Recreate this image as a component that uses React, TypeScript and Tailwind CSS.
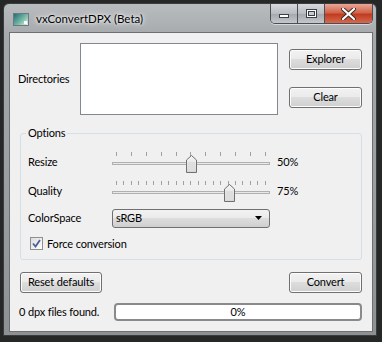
import React from 'react';

const font = { fontFamily: 'Lato, "Noto Sans", sans-serif' };

function WinButton({ label, className = '' }: { label: string; className?: string }) {
  return (
    <div
      className={`flex h-[21px] items-center justify-center whitespace-nowrap rounded-[3px] border border-[#707070] bg-[linear-gradient(#f2f2f2_0%,#ebebeb_45%,#dddddd_50%,#cfcfcf_100%)] text-black shadow-[inset_0_0_0_1px_#fcfcfc] ${className}`}
    >
      {label}
    </div>
  );
}

function Slider({ ticks, value }: { ticks: number; value: number }) {
  const marks = Array.from({ length: ticks });
  return (
    <div className="relative h-[26px] w-[158px]">
      <div className="absolute left-[4px] right-[4px] top-0 flex justify-between">
        {marks.map((_, i) => (
          <div key={i} className="h-[4px] w-px bg-[#a0a0a0]" />
        ))}
      </div>
      <div className="absolute left-0 right-0 top-[10px] h-[3px] border border-[#b0b0b0] bg-[#e7eaea]" />
      <svg
        className="absolute top-[3px]"
        style={{ left: `${4 + (value / 100) * 150 - 5}px` }}
        width="11"
        height="18"
        viewBox="0 0 11 18"
      >
        <defs>
          <linearGradient id="hg" x1="0" x2="0" y1="0" y2="1">
            <stop offset="0" stopColor="#f6f6f6" />
            <stop offset="1" stopColor="#d6d6d6" />
          </linearGradient>
        </defs>
        <path d="M5.5 0.5 L10.5 5 L10.5 17.5 L0.5 17.5 L0.5 5 Z" fill="url(#hg)" stroke="#707070" />
        <rect x="2" y="7" width="7" height="9" fill="#dedede" />
      </svg>
    </div>
  );
}

function TitleBar() {
  return (
    <div className="flex h-[28px] items-start">
      <div className="mt-[9px] ml-[4px] flex h-[13px] w-[16px] items-end border border-[#6a7a80] bg-[linear-gradient(135deg,#1f6e7a,#7fbfa8_60%,#e8f0ee)]">
        <div className="ml-auto mr-[1px] mb-[1px] h-[3px] w-[3px] bg-white" />
      </div>
      <div className="ml-[7px] mt-[7px] whitespace-nowrap text-[11.5px] leading-[16px] text-black [text-shadow:0_0_6px_#ffffff,0_0_3px_#ffffff]">
        vxConvertDPX (Beta)
      </div>
      <div className="ml-auto flex h-[20px] overflow-hidden rounded-b-[5px] border border-t-0 border-[#4b4f55] shadow-[0_1px_0_#d8d8d8]">
        <div className="flex w-[27px] items-center justify-center border-r border-[#4b4f55] bg-[linear-gradient(#d7d9dc,#b9bcc1_50%,#a4a8ad_51%,#c4c7cb)]">
          <div className="mt-[5px] h-[4px] w-[10px] border border-[#3c3f44] bg-white" />
        </div>
        <div className="flex w-[27px] items-center justify-center border-r border-[#4b4f55] bg-[linear-gradient(#d7d9dc,#b9bcc1_50%,#a4a8ad_51%,#c4c7cb)]">
          <div className="h-[9px] w-[11px] border border-[#3c3f44] bg-white p-[1px]">
            <div className="h-full w-full border border-[#3c3f44] bg-[#c8cbcf]" />
          </div>
        </div>
        <div className="flex w-[47px] items-center justify-center bg-[linear-gradient(#e8a796,#d0654c_45%,#c13c1f_55%,#d66a4e)]">
          <svg width="15" height="12" viewBox="0 0 15 12">
            <path d="M2 1 L13 11 M13 1 L2 11" stroke="#3b2a26" strokeWidth="4" strokeLinecap="round" />
            <path d="M2 1 L13 11 M13 1 L2 11" stroke="#ffffff" strokeWidth="2.2" strokeLinecap="round" />
          </svg>
        </div>
      </div>
    </div>
  );
}

export default function App() {
  return (
    <div className="h-[342px] w-[382px] overflow-hidden bg-[#262828] pl-[3px] pt-[3px]" style={font}>
      <div className="flex h-[333px] w-[374px] flex-col rounded-t-[6px] border border-[#3a3c3e] bg-[linear-gradient(180deg,#b9bcbf_0%,#a6a9ac_10%,#9a9d9f_60%,#8e9193_100%)] pb-[3px] pl-[5px] pr-[3px]">
        <TitleBar />
        <div className="flex h-[301px] w-[364px] flex-col border border-[#6d7073] bg-[#f0f0f0] text-[11px] leading-[16px] tracking-[-0.15px] text-black">
          {/* Directories */}
          <div className="mt-[10px] flex pl-[8px]">
            <div className="flex h-[72px] w-[62px] items-center whitespace-nowrap">Directories</div>
            <div className="h-[72px] w-[198px] border border-[#828790] bg-white" />
            <div className="ml-[11px] flex flex-col gap-[17px] pt-[6px]">
              <WinButton label="Explorer" className="w-[73px]" />
              <WinButton label="Clear" className="w-[73px]" />
            </div>
          </div>

          {/* Options group */}
          <div className="relative mx-[10px] mt-[18px] h-[127px] rounded-[3px] border border-[#d5dfe5]">
            <div className="absolute -top-[9px] left-[5px] bg-[#f0f0f0] px-[2px]">Options</div>
            <div className="flex flex-col pl-[7px] pt-[18px]">
              <div className="flex h-[26px] items-start">
                <div className="mt-[2px] w-[84px]">Resize</div>
                <Slider ticks={11} value={50} />
                <div className="ml-[7px] mt-[2px]">50%</div>
              </div>
              <div className="mt-[3px] flex h-[26px] items-start">
                <div className="mt-[2px] w-[84px]">Quality</div>
                <Slider ticks={21} value={75} />
                <div className="ml-[7px] mt-[2px]">75%</div>
              </div>
              <div className="mt-[2px] flex items-center">
                <div className="w-[84px]">ColorSpace</div>
                <div className="flex h-[19px] w-[158px] items-center rounded-[3px] border border-[#707070] bg-[linear-gradient(#f2f2f2_0%,#ebebeb_45%,#dddddd_50%,#cfcfcf_100%)] pl-[3px] pr-[7px]">
                  <span>sRGB</span>
                  <svg className="ml-auto" width="7" height="4" viewBox="0 0 7 4">
                    <path d="M0 0 L7 0 L3.5 4 Z" fill="#000" />
                  </svg>
                </div>
              </div>
              <div className="mt-[8px] flex items-center pl-[2px]">
                <div className="flex h-[13px] w-[13px] items-center justify-center border border-[#8e8f8f] bg-[linear-gradient(135deg,#dcdcdc,#ffffff)] p-[1px]">
                  <svg width="9" height="9" viewBox="0 0 9 9">
                    <path d="M1 4.5 L3.5 7.5 L8 1" fill="none" stroke="#4a5f97" strokeWidth="1.8" />
                  </svg>
                </div>
                <span className="ml-[4px]">Force conversion</span>
              </div>
            </div>
          </div>

          {/* Bottom buttons */}
          <div className="mt-[12px] flex px-[10px]">
            <WinButton label="Reset defaults" className="w-[82px]" />
            <WinButton label="Convert" className="ml-auto w-[73px]" />
          </div>

          <div className="mt-[10px] flex items-center pl-[9px] pr-[10px]">
            <div className="w-[95px] whitespace-nowrap">0 dpx files found.</div>
            <div className="flex h-[18px] flex-1 items-center justify-center rounded-[4px] border-2 border-[#8a8a8a] bg-white leading-[14px]">
              0%
            </div>
          </div>
        </div>
      </div>
    </div>
  );
}
